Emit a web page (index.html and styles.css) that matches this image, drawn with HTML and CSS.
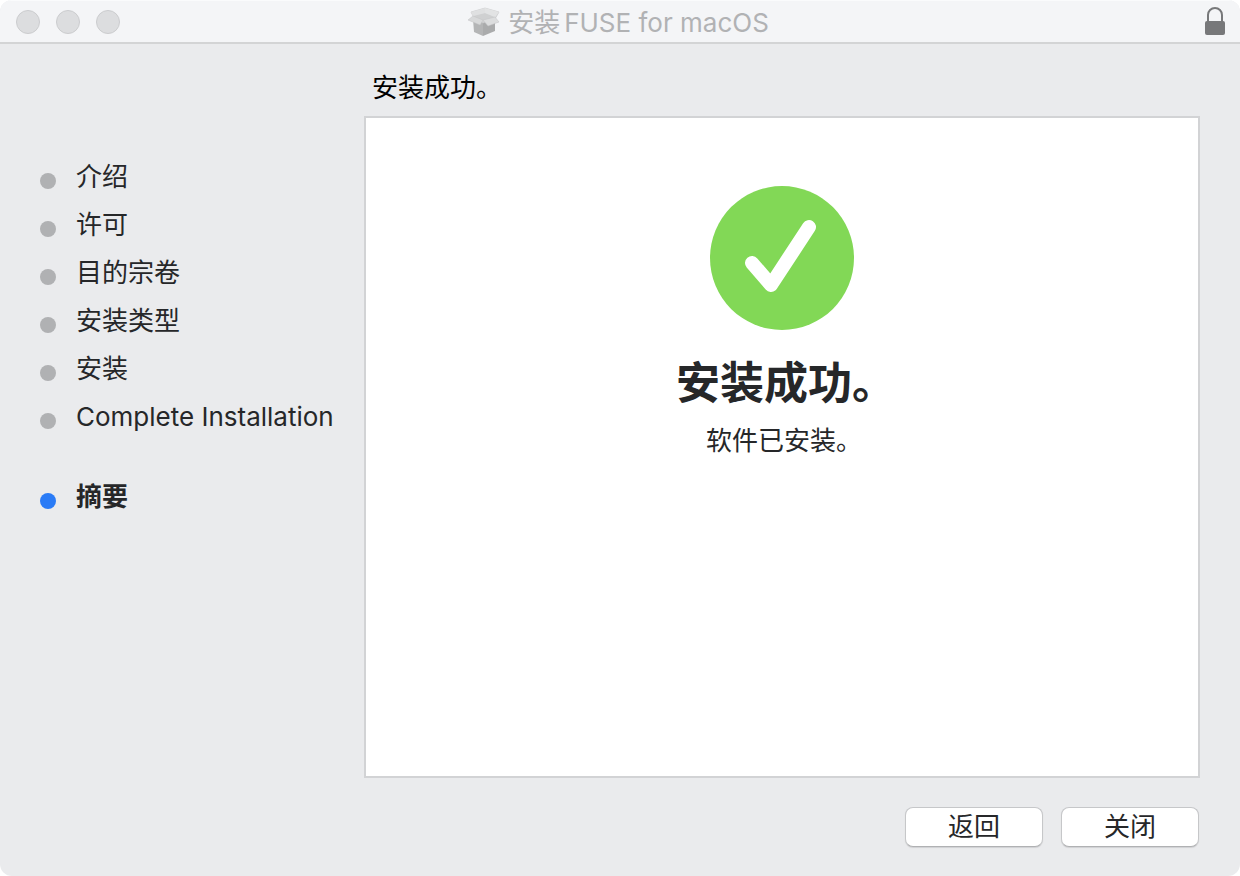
FILE: index.html
```html
<!DOCTYPE html>
<html lang="zh-CN">
<head>
<meta charset="utf-8">
<title>安装 FUSE for macOS</title>
<link rel="stylesheet" href="styles.css">
</head>
<body>
<div class="window">
  <header class="titlebar">
    <div class="lights">
      <button class="light" type="button" aria-label="关闭窗口"></button>
      <button class="light" type="button" aria-label="最小化"></button>
      <button class="light" type="button" aria-label="缩放"></button>
    </div>
    <div class="title">
      <svg class="box-icon" viewBox="0 0 32 30" aria-hidden="true">
        <path d="M5 12 15 15v14L6 25z" fill="#b4b5b6"/>
        <path d="M15 15 27 13v11L15 29z" fill="#aaabac"/>
        <path d="M3 5 17 1l14 4-4 7-12 4L5 9z" fill="#d9dadb" stroke="#c4c5c6" stroke-width=".6"/>
        <path d="M5 9 17 6l10 4-12 5z" fill="#cfd0d1"/>
        <path d="M3 5 17 1v5L5 9z" fill="#dfe0e1"/>
        <path d="M17 1 31 5l-4 5-10-4z" fill="#e2e3e4"/>
        <path d="M5 9 15 13l-3 5-12-5z" fill="#d8d9da" stroke="#c2c3c4" stroke-width=".5"/>
        <path d="M15 13 27 10l4 5-11 4z" fill="#dcddde" stroke="#c2c3c4" stroke-width=".5"/>
      </svg>
      <h1 class="title-text"><span>安装</span><span>FUSE for macOS</span></h1>
    </div>
    <button class="lock" type="button" aria-label="证书">
      <svg viewBox="0 0 20 28" aria-hidden="true">
        <path d="M3 15V8a7 7 0 0 1 14 0V15" fill="none" stroke="#77787a" stroke-width="2"/>
        <rect y="14" width="20" height="14" rx="2" fill="#77787a"/>
      </svg>
    </button>
  </header>
  <div class="body">
    <nav class="sidebar" aria-label="安装步骤">
      <ol class="steps">
        <li class="step">介绍</li>
        <li class="step">许可</li>
        <li class="step">目的宗卷</li>
        <li class="step">安装类型</li>
        <li class="step">安装</li>
        <li class="step">Complete Installation</li>
        <li class="step current" aria-current="step">摘要</li>
      </ol>
    </nav>
    <main class="main">
      <h2 class="heading">安装成功。</h2>
      <section class="panel">
        <svg class="check" viewBox="0 0 144 144" aria-hidden="true">
          <circle cx="72" cy="72" r="72" fill="#82d856"/>
          <path d="M42 77 61 99 99 41" fill="none" stroke="#fff" stroke-width="14" stroke-linecap="round" stroke-linejoin="round"/>
        </svg>
        <h3 class="result">安装成功。</h3>
        <p class="detail">软件已安装。</p>
      </section>
      <footer class="actions">
        <button class="button" type="button">返回</button>
        <button class="button" type="button">关闭</button>
      </footer>
    </main>
  </div>
</div>
</body>
</html>
```
FILE: styles.css
```css
* {
  box-sizing: border-box;
}

body {
  margin: 0;
  background: #fff;
  color: #262729;
  font-family: Inter, "Noto Sans CJK SC", sans-serif;
  font-size: 26px;
  line-height: 40px;
}

h1, h2, h3, p, ol {
  margin: 0;
  padding: 0;
  font-size: inherit;
  font-weight: 400;
}

button {
  padding: 0;
  border: 0;
  background: none;
  color: inherit;
  font: inherit;
}

.window {
  display: flex;
  flex-direction: column;
  min-height: 100vh;
  overflow: hidden;
  border-radius: 12px;
  background: #eaebed;
}

.titlebar {
  display: grid;
  grid-template-columns: 1fr auto 1fr;
  align-items: center;
  height: 44px;
  padding: 0 15px 0 16px;
  border-top: 1px solid #fafbfc;
  border-bottom: 2px solid #d3d4d5;
  background: #f4f5f7;
}

.lights {
  display: flex;
  gap: 16px;
}

.light {
  width: 24px;
  height: 24px;
  border: 1px solid #cbccce;
  border-radius: 50%;
  background: #dcdddf;
}

.title {
  display: flex;
  align-items: center;
  gap: 8px;
  padding-right: 4px;
}

.box-icon {
  width: 32px;
  height: 30px;
}

.title-text {
  display: flex;
  gap: 4px;
  padding-top: 2px;
  color: #b1b2b4;
}

.lock {
  justify-self: end;
  width: 20px;
  height: 30px;
  padding-bottom: 2px;
}

.lock svg {
  display: block;
  height: 28px;
}

.body {
  display: flex;
  flex: 1;
}

.sidebar {
  flex: none;
  width: 364px;
  padding: 113px 0 0 40px;
}

.steps {
  display: grid;
  gap: 8px;
  list-style: none;
}

.step {
  display: flex;
  align-items: center;
  gap: 20px;
  height: 40px;
  white-space: nowrap;
}

.step::before {
  width: 16px;
  height: 16px;
  margin-top: 8px;
  border-radius: 50%;
  background: #b0b1b3;
  content: "";
}

.current {
  margin-top: 32px;
  font-weight: 700;
}

.current::before {
  background: #2a7bf6;
}

.main {
  display: flex;
  flex: 1;
  flex-direction: column;
  padding: 24px 40px 29px 0;
}

.heading {
  padding-left: 8px;
  margin-bottom: 8px;
  color: #000;
}

.panel {
  display: flex;
  flex: 1;
  flex-direction: column;
  align-items: center;
  padding-top: 68px;
  border: 2px solid #d2d3d5;
  background: #fff;
}

.check {
  width: 144px;
  height: 144px;
}

.result {
  margin-top: 21px;
  padding-left: 8px;
  font-size: 44px;
  font-weight: 700;
  line-height: 64px;
}

.detail {
  margin-top: 6px;
  padding-left: 4px;
}

.actions {
  display: flex;
  justify-content: flex-end;
  gap: 18px;
  padding: 29px 1px 0 0;
}

.button {
  width: 138px;
  height: 40px;
  border: 1px solid #c6c7c9;
  border-bottom-color: #b0b1b3;
  border-radius: 8px;
  background: #fff;
  box-shadow: 0 1px 1px #d0d1d3;
  line-height: 38px;
}
```
